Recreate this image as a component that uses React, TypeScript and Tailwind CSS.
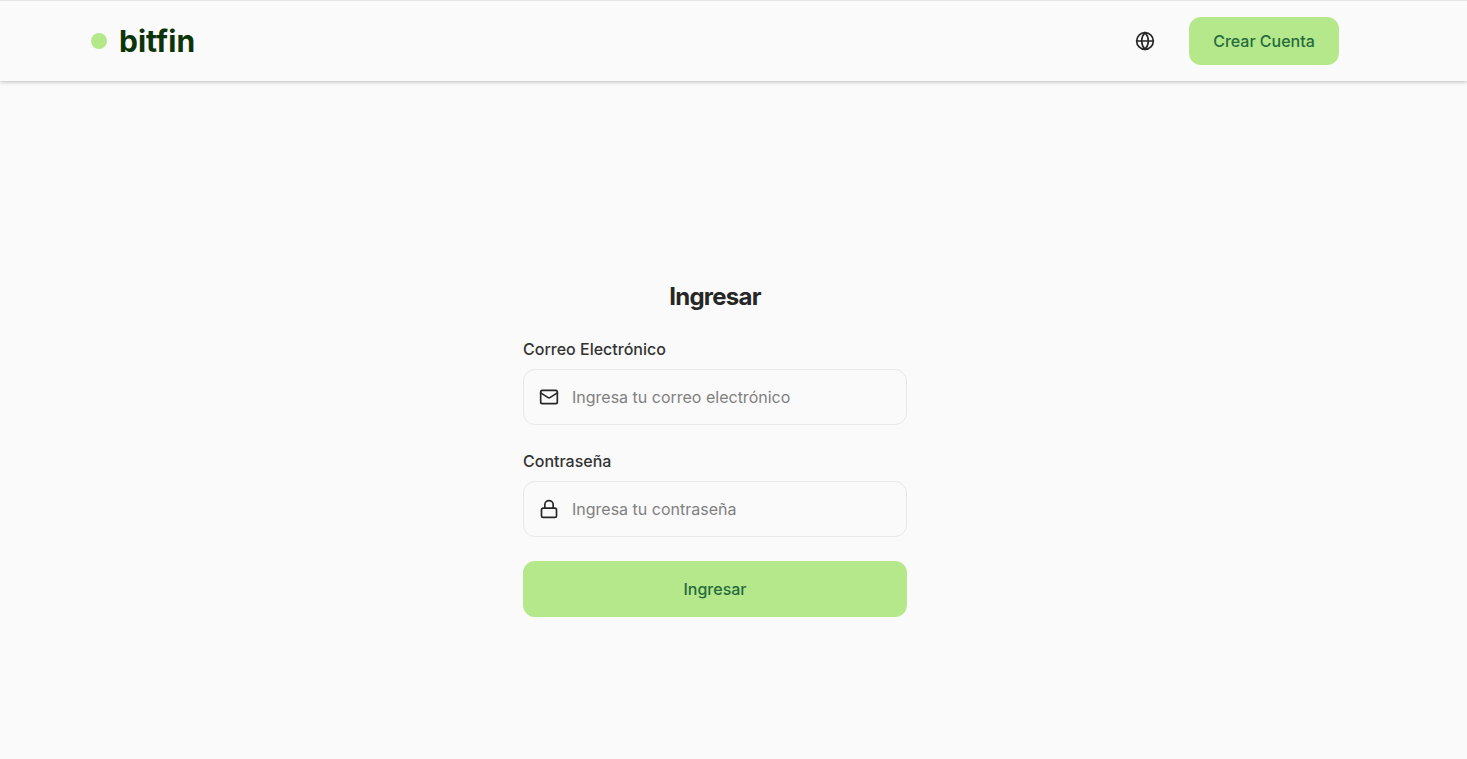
import { Globe, Lock, Mail } from "lucide-react";

export default function App() {
  return (
    <div className="min-h-[759px] bg-[#fafafa] font-['Inter',sans-serif] antialiased flex flex-col">
      <header className="h-[81px] border-t border-[#e4e4e4] bg-[#fafafa] shadow-[0_1px_4px_rgba(0,0,0,0.25)] pl-[91px] pr-[128px] flex items-center justify-between">
        <div className="flex items-center gap-3">
          <span className="w-4 h-4 rounded-full bg-[#b5e88a]" />
          <span className="text-[30px] leading-9 font-bold text-[#0c3409]">bitfin</span>
        </div>
        <div className="flex items-center gap-[34px]">
          <Globe className="w-5 h-5 text-[#262626]" strokeWidth={2} />
          <button className="w-[150px] h-12 rounded-xl bg-[#b5e88a] text-[#256b3e] text-base font-medium">Crear Cuenta</button>
        </div>
      </header>
      <main className="flex-1 flex justify-center pt-[199px] pr-[37px]">
        <form className="w-[384px] flex flex-col">
          <h1 className="text-2xl leading-8 font-bold tracking-[-0.03em] text-[#262626] text-center pt-[1px]">Ingresar</h1>
          <label className="mt-6 text-base leading-6 font-medium text-[#333333]">Correo Electrónico</label>
          <div className="mt-2 h-14 rounded-xl border border-[#e8e8e8] flex items-center gap-[13px] px-[15px]">
            <Mail className="w-5 h-5 text-[#262626]" strokeWidth={2} />
            <span className="text-base text-[#808080]">Ingresa tu correo electrónico</span>
          </div>
          <label className="mt-6 text-base leading-6 font-medium text-[#333333]">Contraseña</label>
          <div className="mt-2 h-14 rounded-xl border border-[#e8e8e8] flex items-center gap-[13px] px-[15px]">
            <Lock className="w-5 h-5 text-[#262626]" strokeWidth={2} />
            <span className="text-base text-[#808080]">Ingresa tu contraseña</span>
          </div>
          <button type="button" className="mt-6 h-14 rounded-xl bg-[#b5e88a] text-[#256b3e] text-base font-medium">Ingresar</button>
        </form>
      </main>
    </div>
  );
}
